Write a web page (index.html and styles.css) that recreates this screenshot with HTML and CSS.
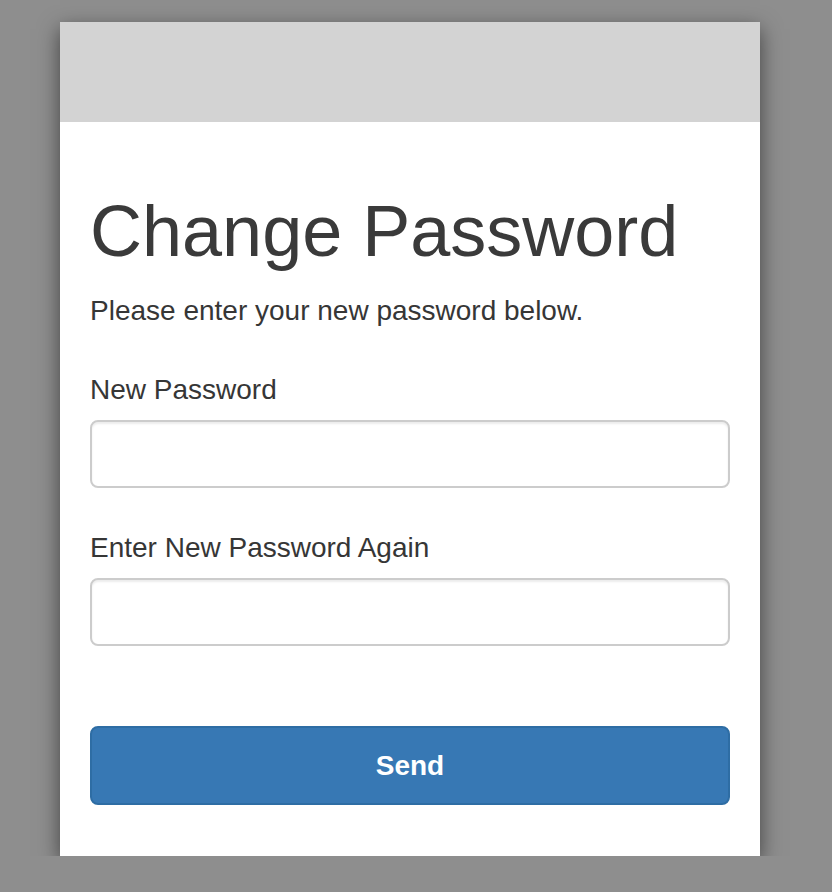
FILE: index.html
```html
<!DOCTYPE html>
<html>
<head>
    <title>Change Password</title>
    <link rel="stylesheet" href="styles.css">
</head>
<body>
    <div class="card">
        <div class="card-head"></div>
        <form class="card-body" method="POST">
            <h1>Change Password</h1>
            <p class="lead">Please enter your new password below.</p>

            <div class="form-group">
                <label for="pass">New Password</label>
                <input type="password" name="pass" id="pass" class="form-control">
            </div>
            <div class="form-group">
                <label for="pass2">Enter New Password Again</label>
                <input type="password" name="pass2" id="pass2" class="form-control">
            </div>

            <button type="submit" class="btn-send">Send</button>
        </form>
    </div>
</body>
</html>
```

FILE: styles.css
```css
body {
    margin: 0;
    padding: 22px 0 0 60px;
    background: #8e8e8e;
    font-family: "Liberation Sans", Arial, sans-serif;
    font-size: 28px;
    line-height: 40px;
    color: #363636;
}

.card {
    width: 700px;
    background: #fff;
    box-shadow: 0 7px 20px rgba(0, 0, 0, 0.55);
}
.card-head {
    height: 100px;
    background: #d3d3d3;
}
.card-body {
    padding: 30px 30px 51px 30px;
    margin: 0;
}

h1 {
    font-size: 72px;
    font-weight: normal;
    line-height: 79px;
    margin: 40px 0 20px 0;
    color: #3a3a3a;
}
.lead {margin: 0 0 39px 0;}

.form-group {margin-bottom: 40px;}
label {
    display: block;
    margin-bottom: 10px;
}
.form-control {
    display: block;
    box-sizing: border-box;
    width: 100%;
    height: 68px;
    padding: 12px 24px;
    border: 2px solid #ccc;
    border-radius: 8px;
    box-shadow: inset 0 2px 2px rgba(0, 0, 0, 0.075);
    font: inherit;
}

.btn-send {
    display: block;
    box-sizing: border-box;
    width: 100%;
    height: 79px;
    margin-top: 80px;
    background: #3778b4;
    border: 2px solid #2e6da4;
    border-radius: 8px;
    color: #fff;
    font: bold 28px "Liberation Sans", Arial, sans-serif;
}
```
